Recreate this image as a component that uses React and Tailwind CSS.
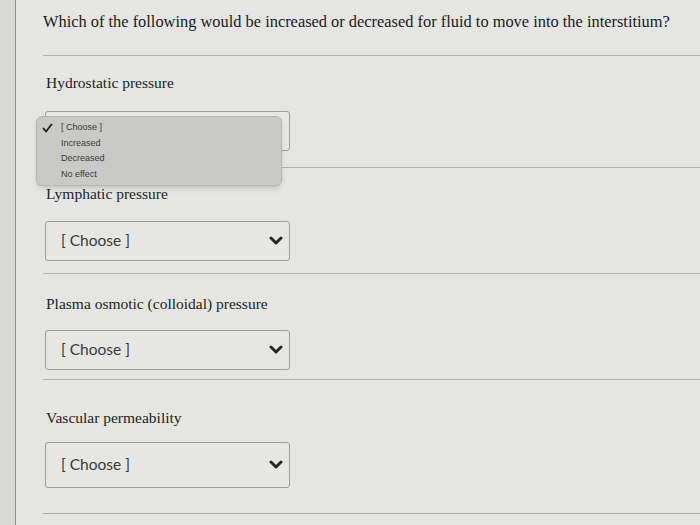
const serif = { fontFamily: '"Liberation Serif", "Times New Roman", serif' };

const questions = [
  { id: 'hydro', label: 'Hydrostatic pressure', open: true, pt: 'pt-[17px]', mt: 'mt-[18px]', pb: 'pb-[16px]', h: 'h-10' },
  { id: 'lymph', label: 'Lymphatic pressure', pt: 'pt-[16px]', mt: 'mt-[17px]', pb: 'pb-[12px]', h: 'h-10' },
  { id: 'plasma', label: 'Plasma osmotic (colloidal) pressure', pt: 'pt-[20px]', mt: 'mt-[16px]', pb: 'pb-[9px]', h: 'h-10' },
  { id: 'vasc', label: 'Vascular permeability', pt: 'pt-[28px]', mt: 'mt-[14px]', pb: 'pb-[25px]', h: 'h-[46px]' },
];

const options = ['[ Choose ]', 'Increased', 'Decreased', 'No effect'];

const Chevron = () => (
  <svg width="14" height="10" viewBox="0 0 14 10" className="text-[#262626]">
    <polyline points="2,2 7,7 12,2" fill="none" stroke="currentColor" strokeWidth="3" strokeLinecap="round" strokeLinejoin="round" />
  </svg>
);

const Check = () => (
  <svg width="11" height="10" viewBox="0 0 11 10" className="absolute left-[5px] text-[#1e1e1e]">
    <polyline points="1.5,5.5 4,8.5 9.5,1.5" fill="none" stroke="currentColor" strokeWidth="1.8" strokeLinecap="round" strokeLinejoin="round" />
  </svg>
);

const SelectBox = ({ open, h }) => (
  <div className="relative w-[245px]">
    <div className={`${h} flex items-center justify-between pl-[15px] pr-[6px] border border-[#9d9e9c] rounded-[3px] bg-[#e6e7e5]`}>
      {!open && (
        <span className="text-[15.5px] text-[#3a3a3a]" style={{ fontFamily: 'Lato, "Open Sans", sans-serif' }}>
          [ Choose ]
        </span>
      )}
      {!open && <Chevron />}
    </div>
    {open && (
      <div
        className="absolute top-[5px] left-[-9px] w-[246px] rounded-[6px] bg-[#c9cac8] border border-[#b7b8b6] shadow-md py-[3px] z-10"
        style={{ fontFamily: '"Liberation Sans", Arial, sans-serif' }}
      >
        {options.map((opt, i) => (
          <div key={opt} className="relative h-[15.5px] flex items-center pl-[24px] text-[9px] text-[#3a3a3a]">
            {i === 0 && <Check />}
            {opt}
          </div>
        ))}
      </div>
    )}
  </div>
);

export default function App() {
  return (
    <div className="w-[700px] h-[525px] overflow-hidden flex bg-[#e5e6e4]">
      <div className="w-[16px] shrink-0 bg-[#d8d9d7] border-r border-[#8d8e8c]" />
      <div className="flex-1 pl-[27px]">
        <div className="pt-[12px] h-[55px]">
          <p className="text-[16.4px] leading-[20px] text-[#1a1a1a] whitespace-nowrap" style={serif}>
            Which of the following would be increased or decreased for fluid to move into the interstitium?
          </p>
        </div>
        {questions.map((q) => (
          <div key={q.id} className={`border-t border-[#b3b4b2] ${q.pt} ${q.pb}`}>
            <div className="pl-[3px] h-5 text-[15.5px] leading-5 text-[#222]" style={serif}>
              {q.label}
            </div>
            <div className={`${q.mt} pl-[2px]`}>
              <SelectBox open={q.open} h={q.h} />
            </div>
          </div>
        ))}
        <div className="border-t border-[#a9aaa8]" />
      </div>
    </div>
  );
}
